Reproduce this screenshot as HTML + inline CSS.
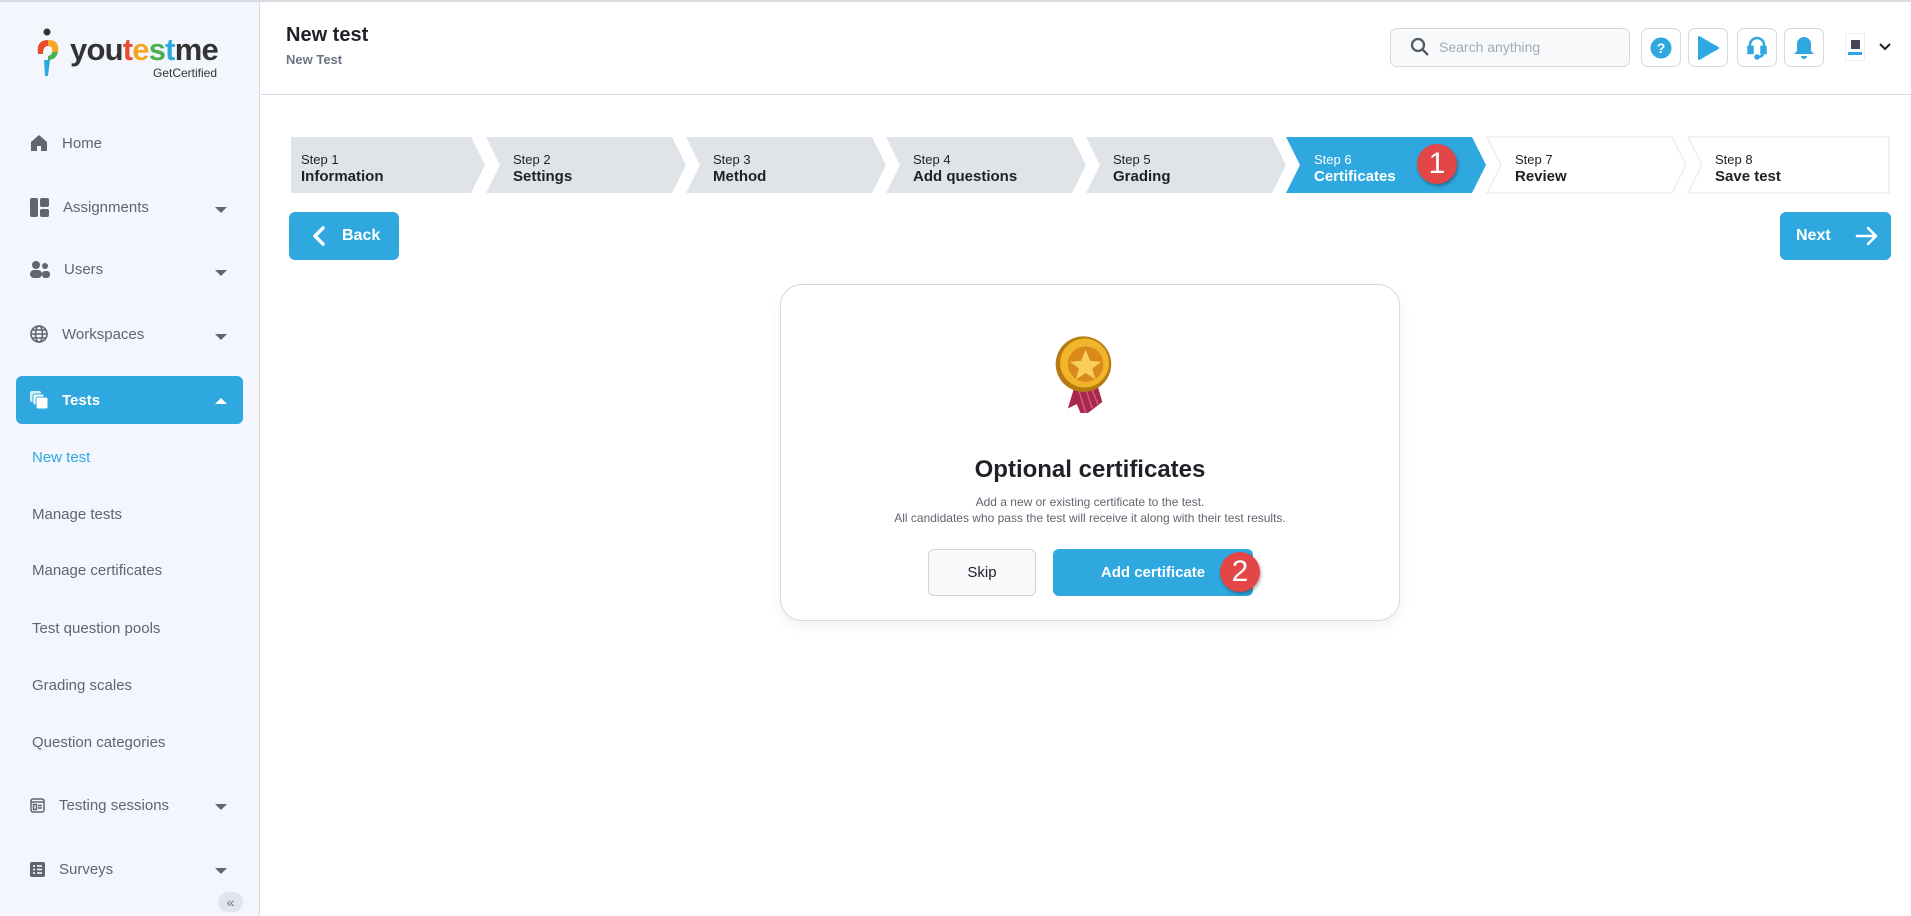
<!DOCTYPE html>
<html><head><meta charset="utf-8"><style>
*{box-sizing:border-box;margin:0;padding:0}
body{width:1911px;height:916px;overflow:hidden;background:#fff;font-family:"Liberation Sans",sans-serif;position:relative}
.abs{position:absolute}
#side{left:0;top:2px;width:260px;height:914px;background:#f3f6fd;border-right:1px solid #d7dce3}
.nav{position:absolute;left:30px;font-size:15px;color:#5f6670;display:flex;align-items:center}
.nav svg{margin-right:14px}
.caret{position:absolute;left:215px;width:0;height:0;border-left:6px solid transparent;border-right:6px solid transparent;border-top:6px solid #5f6670}
.sub{position:absolute;left:32px;font-size:15px;color:#5f6670}
.ib{position:absolute;top:28px;width:40px;height:39px;border:1px solid #d3d9e0;border-radius:7px;background:#fff;display:flex;align-items:center;justify-content:center}
.st{position:absolute;top:151px;font-size:13px;color:#1e2227;line-height:17px}
.st b{display:block;font-size:15px;font-weight:bold;color:#1e2227}
.badge{position:absolute;width:40px;height:40px;border-radius:50%;background:#e24646;color:#fff;font-size:30px;text-align:center;line-height:40px;box-shadow:1px 2px 3px rgba(0,0,0,.35)}
</style></head><body>
<div class="abs" style="left:0;top:0;width:1911px;height:2px;background:#d7dce3"></div>
<div id="side" class="abs">
 <svg class="abs" style="left:34px;top:26px" width="30" height="52" viewBox="0 0 30 52">
  <circle cx="13" cy="4" r="3.5" fill="#333"/>
  <path d="M4 26 Q2 12 14 12 L14 18 Q9 18 9 26Z" fill="#e84c2a"/>
  <path d="M14 12 Q26 12 24 24 L18 24 Q19 18 14 18Z" fill="#f5a623"/>
  <path d="M24 24 Q22 32 14 32 L14 28 Q18 27 18 24Z" fill="#4caf50"/>
  <path d="M10 32 L16 32 L14 48 L11 48Z" fill="#2ea8df"/>
 </svg>
 <div class="abs" style="left:70px;top:30px;font-size:31px;font-weight:bold;letter-spacing:-0.8px;color:#333;line-height:36px">you<span style="color:#e84c2a">t</span><span style="color:#f5a623">e</span><span style="color:#4caf50">s</span><span style="color:#2ea8df">t</span>me</div>
 <div class="abs" style="left:153px;top:64px;font-size:12px;color:#333">GetCertified</div>

 <div class="nav" style="top:132px"><svg width="18" height="18" viewBox="0 0 18 18"><path d="M1 8 L9 1 L17 8 V17 H11 V12 H7 V17 H1Z" fill="#5f6670"/></svg>Home</div>
 <div class="nav" style="top:196px"><svg width="19" height="19" viewBox="0 0 19 19"><rect x="0" y="0" width="8" height="19" rx="2" fill="#5f6670"/><rect x="10" y="0" width="9" height="9" rx="2" fill="#5f6670"/><rect x="10" y="11" width="9" height="8" rx="2" fill="#5f6670"/></svg>Assignments</div><div class="caret" style="top:205px"></div>
 <div class="nav" style="top:259px"><svg width="20" height="17" viewBox="0 0 20 17"><circle cx="6" cy="4" r="4" fill="#5f6670"/><circle cx="15" cy="5" r="3" fill="#5f6670"/><rect x="0" y="9" width="12" height="8" rx="4" fill="#5f6670"/><rect x="12" y="10" width="8" height="7" rx="3" fill="#5f6670"/></svg>Users</div><div class="caret" style="top:268px"></div>
 <div class="nav" style="top:323px"><svg width="18" height="18" viewBox="0 0 18 18" fill="none" stroke="#5f6670" stroke-width="1.6"><circle cx="9" cy="9" r="8"/><ellipse cx="9" cy="9" rx="3.5" ry="8"/><path d="M1 9H17M2.5 5H15.5M2.5 13H15.5"/></svg>Workspaces</div><div class="caret" style="top:332px"></div>
 <div class="abs" style="left:16px;top:374px;width:227px;height:48px;background:#2ea8df;border-radius:6px"></div>
 <div class="nav" style="top:389px;color:#fff;font-weight:bold"><svg width="18" height="18" viewBox="0 0 18 18"><rect x="0" y="0" width="11" height="11" rx="2" fill="#fff" opacity=".8"/><rect x="3" y="3" width="11" height="11" rx="2" fill="#fff" stroke="#2ea8df"/><rect x="6" y="6" width="12" height="12" rx="2" fill="#fff" stroke="#2ea8df"/></svg>Tests</div>
 <div class="abs" style="left:215px;top:396px;width:0;height:0;border-left:6px solid transparent;border-right:6px solid transparent;border-bottom:6px solid #fff"></div>
 <div class="sub" style="top:447px;color:#2ea8df">New test</div>
 <div class="sub" style="top:504px">Manage tests</div>
 <div class="sub" style="top:560px">Manage certificates</div>
 <div class="sub" style="top:618px">Test question pools</div>
 <div class="sub" style="top:675px">Grading scales</div>
 <div class="sub" style="top:732px">Question categories</div>
 <div class="nav" style="top:795px"><svg width="15" height="15" viewBox="0 0 15 15" fill="none" stroke="#5f6670" stroke-width="1.5"><rect x="1" y="1" width="13" height="13" rx="2"/><path d="M1 4H14"/><rect x="3.5" y="6.5" width="3" height="5"/><path d="M8 7.5H12M8 10H12"/></svg>Testing sessions</div><div class="caret" style="top:802px"></div>
 <div class="nav" style="top:859px"><svg width="15" height="15" viewBox="0 0 15 15"><rect x="0" y="0" width="15" height="15" rx="2" fill="#5f6670"/><path d="M3 4H5M7 4H12M3 7.5H5M7 7.5H12M3 11H5M7 11H12" stroke="#fff" stroke-width="1.5"/></svg>Surveys</div><div class="caret" style="top:866px"></div>
 <div class="abs" style="left:218px;top:890px;width:25px;height:20px;border-radius:10px;background:#e1e5eb;color:#6b7280;font-size:14px;text-align:center;line-height:20px">«</div>
</div>

<div class="abs" style="left:261px;top:94px;width:1650px;height:1px;background:#d7dce3"></div>
<div class="abs" style="left:286px;top:24px;font-size:20px;font-weight:bold;color:#1e2227">New test</div>
<div class="abs" style="left:286px;top:52px;font-size:13px;font-weight:bold;color:#6b7583">New Test</div>

<div class="abs" style="left:1390px;top:28px;width:240px;height:39px;border:1px solid #d3d9e0;border-radius:7px;background:#f8f9fb"></div>
<svg class="abs" style="left:1410px;top:37px" width="20" height="20" viewBox="0 0 20 20" fill="none" stroke="#545b64" stroke-width="2.3"><circle cx="8" cy="8" r="6"/><path d="M12.5 12.5L18 18"/></svg>
<div class="abs" style="left:1439px;top:39px;font-size:14px;color:#a3aab3">Search anything</div>
<div class="ib" style="left:1641px"><svg width="22" height="22" viewBox="0 0 22 22"><circle cx="11" cy="11" r="10.5" fill="#2ea8df"/><text x="11" y="16" font-size="14" font-weight="bold" fill="#fff" text-anchor="middle" font-family="Liberation Sans">?</text></svg></div>
<div class="ib" style="left:1688px"><svg width="22" height="24" viewBox="0 0 22 24"><path d="M2 1L21 12L2 23Z" fill="#2ea8df" stroke="#2ea8df" stroke-linejoin="round" stroke-width="2"/></svg></div>
<div class="ib" style="left:1737px"><svg width="20" height="24" viewBox="0 0 20 24" fill="none" stroke="#2ea8df" stroke-width="2.5"><path d="M3 13V9a7 7 0 0 1 14 0v4"/><rect x="1.5" y="11" width="4" height="6" fill="#2ea8df"/><rect x="14.5" y="11" width="4" height="6" fill="#2ea8df"/><path d="M16 17q0 4-6 4"/><circle cx="10" cy="21" r="1.5" fill="#2ea8df"/></svg></div>
<div class="ib" style="left:1784px"><svg width="22" height="24" viewBox="0 0 22 24"><path d="M11 1a7 7 0 0 1 7 7v7l3 3H1l3-3V8a7 7 0 0 1 7-7Z" fill="#2ea8df"/><path d="M8 20h6a3 3 0 0 1-6 0" fill="#2ea8df"/></svg></div>
<div class="abs" style="left:1845px;top:33px;width:20px;height:28px;background:#fff;border:1px solid #eee"><div style="margin:6px 5px;width:9px;height:9px;background:#445"></div><div style="margin:-3px 2px 0;width:14px;height:3px;background:#2ea8df"></div></div>
<svg class="abs" style="left:1879px;top:43px" width="12" height="8" viewBox="0 0 12 8" fill="none" stroke="#222" stroke-width="2"><path d="M1 1L6 6L11 1"/></svg>

<svg class="abs" style="left:0;top:0" width="1911" height="200">
 <g fill="#e0e3e8">
  <path d="M291 137H471L485 165L471 193H291Z" rx="3"/>
  <path d="M486 137H672L686 165L672 193H486L500 165Z"/>
  <path d="M686 137H872L886 165L872 193H686L700 165Z"/>
  <path d="M886 137H1072L1086 165L1072 193H886L900 165Z"/>
  <path d="M1086 137H1272L1286 165L1272 193H1086L1100 165Z"/>
 </g>
 <path d="M1286 137H1472L1486 165L1472 193H1286L1300 165Z" fill="#2ea8df"/>
 <g fill="#fff" stroke="#eceef1" stroke-width="1.5">
  <path d="M1487 137H1672L1686 165L1672 193H1487L1501 165Z"/>
  <path d="M1688 137H1889V193H1688L1702 165Z"/>
 </g>
</svg>
<div class="st" style="left:301px">Step 1<b>Information</b></div>
<div class="st" style="left:513px">Step 2<b>Settings</b></div>
<div class="st" style="left:713px">Step 3<b>Method</b></div>
<div class="st" style="left:913px">Step 4<b>Add questions</b></div>
<div class="st" style="left:1113px">Step 5<b>Grading</b></div>
<div class="st" style="left:1314px;color:#fff">Step 6<b style="color:#fff">Certificates</b></div>
<div class="st" style="left:1515px">Step 7<b>Review</b></div>
<div class="st" style="left:1715px">Step 8<b>Save test</b></div>
<div class="badge" style="left:1417px;top:144px">1</div>

<div class="abs" style="left:289px;top:212px;width:110px;height:48px;background:#2ea8df;border-radius:6px"></div>
<svg class="abs" style="left:312px;top:225px" width="14" height="22" viewBox="0 0 14 22" fill="none" stroke="#fff" stroke-width="3.5" stroke-linecap="round" stroke-linejoin="round"><path d="M11 3L3 11L11 19"/></svg>
<div class="abs" style="left:342px;top:227px;font-size:16px;font-weight:bold;color:#fff">Back</div>
<div class="abs" style="left:1780px;top:212px;width:111px;height:48px;background:#2ea8df;border-radius:6px"></div>
<div class="abs" style="left:1796px;top:227px;font-size:16px;font-weight:bold;color:#fff">Next</div>
<svg class="abs" style="left:1855px;top:225px" width="24" height="22" viewBox="0 0 24 22" fill="none" stroke="#fff" stroke-width="2.6" stroke-linecap="round" stroke-linejoin="round"><path d="M2 11H21M13 3L21 11L13 19"/></svg>

<div class="abs" style="left:780px;top:284px;width:620px;height:337px;border:1px solid #d3d9e0;border-radius:22px;background:#fff;box-shadow:0 6px 14px rgba(0,0,0,.05)"></div>
<svg class="abs" style="left:1052px;top:333px" width="74" height="80" viewBox="0 0 66 72">
 <path d="M20 48L14 68L22 64L27 76L45 62L40 45Z" fill="#a8284f"/>
 <path d="M24 52L30 72M30 50L36 68M35 49L41 64" stroke="#d45a7c" stroke-width="1.3"/>
 <circle cx="28" cy="28" r="25" fill="#b77a10"/>
 <circle cx="29" cy="27" r="22" fill="#f0b52a"/>
 <circle cx="30" cy="28" r="16" fill="#d98a1a"/>
 <path d="M30 15L34 25L44 26L36 32L39 42L30 36L21 42L24 32L16 26L26 25Z" fill="#f7cf5a"/>
</svg>
<div class="abs" style="left:780px;top:456px;width:620px;text-align:center;font-size:24px;font-weight:bold;color:#1e2227">Optional certificates</div>
<div class="abs" style="left:780px;top:494px;width:620px;text-align:center;font-size:12px;color:#5f6670;line-height:16px">Add a new or existing certificate to the test.<br>All candidates who pass the test will receive it along with their test results.</div>
<div class="abs" style="left:928px;top:549px;width:108px;height:47px;border:1px solid #cfd5dc;border-radius:6px;background:#f8f9fb;text-align:center;line-height:45px;font-size:15px;color:#1e2227">Skip</div>
<div class="abs" style="left:1053px;top:549px;width:200px;height:47px;border-radius:6px;background:#2ea8df;text-align:center;line-height:47px;font-size:15px;font-weight:bold;color:#fff">Add certificate</div>
<div class="badge" style="left:1220px;top:552px">2</div>
</body></html>
